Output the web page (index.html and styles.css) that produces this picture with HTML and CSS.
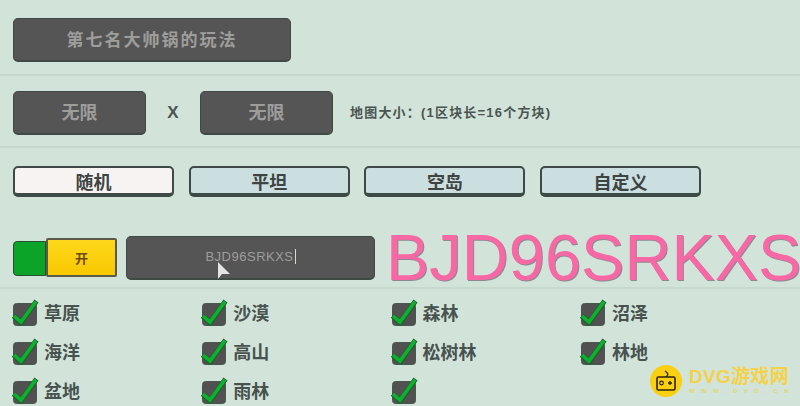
FILE: index.html
```html
<!DOCTYPE html>
<html lang="zh-CN">
<head>
    <meta charset="UTF-8">
    <title>第七名大帅锅的玩法</title>
    <link rel="stylesheet" href="styles.css">
</head>
<body>
    <svg width="0" height="0" class="defs">
        <symbol id="check" viewBox="0 0 28 28">
            <rect x="2.5" y="5.5" width="23" height="22" rx="3" fill="#515151" stroke="#46594f" stroke-width="1"/>
            <path d="M2.5 18 L10 25 L25.5 3" fill="none" stroke="#24602f" stroke-width="5"/>
            <path d="M3 18 L10 24 L25 3.5" fill="none" stroke="#0bb22e" stroke-width="3.6"/>
        </symbol>
    </svg>

    <div class="row row-title">
        <div class="dark-box title-box">第七名大帅锅的玩法</div>
    </div>

    <div class="row row-size">
        <div class="dark-box size-box">无限</div>
        <span class="times">X</span>
        <div class="dark-box size-box">无限</div>
        <span class="size-note">地图大小：(1区块长=16个方块)</span>
    </div>

    <div class="row row-tabs">
        <button class="tab active">随机</button>
        <button class="tab">平坦</button>
        <button class="tab">空岛</button>
        <button class="tab">自定义</button>
    </div>

    <div class="row row-seed">
        <div class="toggle">
            <span class="toggle-green"></span>
            <span class="toggle-knob">开</span>
        </div>
        <div class="dark-box seed-box">
            <span class="seed-text">BJD96SRKXS</span>
            <svg class="cursor" width="16" height="20" viewBox="0 0 16 20">
                <path d="M2 1 L2 18 L6 13 L14 13 Z" fill="#e4e4e4"/>
            </svg>
        </div>
        <span class="seed-big">BJD96SRKXS</span>
    </div>

    <div class="biomes">
        <label class="biome"><svg class="tick"><use href="#check"/></svg>草原</label>
        <label class="biome"><svg class="tick"><use href="#check"/></svg>沙漠</label>
        <label class="biome"><svg class="tick"><use href="#check"/></svg>森林</label>
        <label class="biome"><svg class="tick"><use href="#check"/></svg>沼泽</label>
        <label class="biome"><svg class="tick"><use href="#check"/></svg>海洋</label>
        <label class="biome"><svg class="tick"><use href="#check"/></svg>高山</label>
        <label class="biome"><svg class="tick"><use href="#check"/></svg>松树林</label>
        <label class="biome"><svg class="tick"><use href="#check"/></svg>林地</label>
        <label class="biome"><svg class="tick"><use href="#check"/></svg>盆地</label>
        <label class="biome"><svg class="tick"><use href="#check"/></svg>雨林</label>
        <label class="biome"><svg class="tick"><use href="#check"/></svg></label>
    </div>

    <!-- watermark -->
    <div class="mark">
        <svg width="32" height="32" viewBox="0 0 32 32">
            <circle cx="16" cy="16" r="16" fill="#fbd011"/>
            <rect x="7" y="12" width="18" height="13" rx="1.5" fill="none" stroke="#2b2410" stroke-width="1.6"/>
            <path d="M16 12 C19 10 18 8 15 6" fill="none" stroke="#2b2410" stroke-width="1.4"/>
            <circle cx="11.5" cy="18" r="1.8" fill="none" stroke="#2b2410" stroke-width="1.2"/>
            <path d="M18 18 H22 M20 16 V20" stroke="#2b2410" stroke-width="1.4"/>
        </svg>
        <div class="mark-text">
            <span class="mark-name">DVG游戏网</span>
            <span class="mark-url">WWW.DVG.CN</span>
        </div>
    </div>
</body>
</html>
```

FILE: styles.css
```css
* {
    box-sizing: border-box;
}

html, body {
    height: 100%;
}

body {
    margin: 0;
    width: 800px;
    height: 406px;
    overflow: hidden;
    position: relative;
    background: #d2e4da;
    color: #4a5450;
    font-family: "Liberation Sans", "Noto Sans CJK SC", sans-serif;
}

.defs {
    display: block;
    height: 0;
}

.row {
    display: flex;
    align-items: center;
    padding-left: 13px;
    border-bottom: 2px solid #c6d9ce;
}

.row-title {
    height: 76px;
    padding-top: 5px;
}

.row-size {
    height: 72px;
    padding-top: 3px;
}

.row-tabs {
    height: 81px;
    gap: 14.7px;
    padding-bottom: 15px;
    border-bottom: 0;
}

.row-seed {
    height: 53px;
    align-items: flex-start;
    margin-top: 7px;
    overflow: visible;
}

.dark-box {
    display: flex;
    align-items: center;
    justify-content: center;
    flex-shrink: 0;
    height: 44px;
    padding-bottom: 2px;
    background: #565555;
    border: 1px solid #3f4a45;
    border-bottom-width: 2px;
    border-radius: 5px;
    color: #9d9d9b;
    font-weight: 700;
}

.title-box {
    width: 278px;
    font-size: 17px;
    letter-spacing: 2px;
}

.size-box {
    width: 133px;
    font-size: 18px;
}

.times {
    width: 54px;
    text-align: center;
    font-size: 17px;
    font-weight: 700;
}

.size-note {
    margin-left: 17px;
    padding-bottom: 2px;
    font-size: 13px;
    letter-spacing: 1.2px;
    font-weight: 700;
    white-space: nowrap;
}

.tab {
    width: 161px;
    height: 31px;
    padding: 0 0 5px;
    background: #cbdfe0;
    border: 2px solid #3e4a45;
    border-bottom-width: 4px;
    border-radius: 5px;
    color: #3e4442;
    font-family: inherit;
    font-size: 18px;
    font-weight: 700;
}

.tab.active {
    background: #f6f3f2;
}

.toggle {
    display: flex;
    flex-shrink: 0;
    width: 104px;
    height: 39px;
    margin-top: 2px;
}

.toggle-green {
    width: 33px;
    margin-top: 3px;
    height: 35px;
    background: #0ba428;
    border: 1px solid #24502f;
    border-radius: 4px 0 0 4px;
}

.toggle-knob {
    width: 71px;
    display: flex;
    align-items: center;
    justify-content: center;
    background: linear-gradient(#fdd81c, #f9c800);
    border: 2px solid #5b5a48;
    border-radius: 2px;
    color: #6b4a10;
    font-size: 13px;
    font-weight: 700;
}

.seed-box {
    position: relative;
    width: 249px;
    margin-left: 9px;
    font-size: 13px;
    font-weight: 400;
}

.seed-text {
    padding-right: 1px;
    border-right: 1px solid #d8d8d8;
    line-height: 15px;
    letter-spacing: 0.5px;
}

.cursor {
    position: absolute;
    left: 89px;
    top: 24px;
}

.seed-big {
    margin-left: 11px;
    color: #f768a4;
    font-size: 65px;
    line-height: 44px;
    white-space: nowrap;
    letter-spacing: 0;
    text-shadow: 1px 1px 0 #8b8b8f;
}

.biomes {
    display: grid;
    grid-template-columns: repeat(4, 189.3px);
    grid-auto-rows: 39px;
    padding: 5px 0 0 11px;
}

.biome {
    display: flex;
    align-items: center;
    gap: 5px;
    padding-bottom: 3px;
    font-size: 18px;
    font-weight: 700;
    color: #48524e;
}

.tick {
    width: 28px;
    height: 28px;
}

.mark {
    position: absolute;
    left: 650px;
    top: 365px;
    display: flex;
    align-items: center;
    gap: 7px;
}

.mark-text {
    display: flex;
    flex-direction: column;
    gap: 2px;
}

.mark-name {
    color: #f3d24a;
    font-size: 19px;
    line-height: 18px;
    font-weight: 700;
    letter-spacing: 0.3px;
    white-space: nowrap;
}

.mark-url {
    color: #e3d56a;
    font-size: 6px;
    line-height: 7px;
    letter-spacing: 6.4px;
    font-weight: 700;
    white-space: nowrap;
}
```
